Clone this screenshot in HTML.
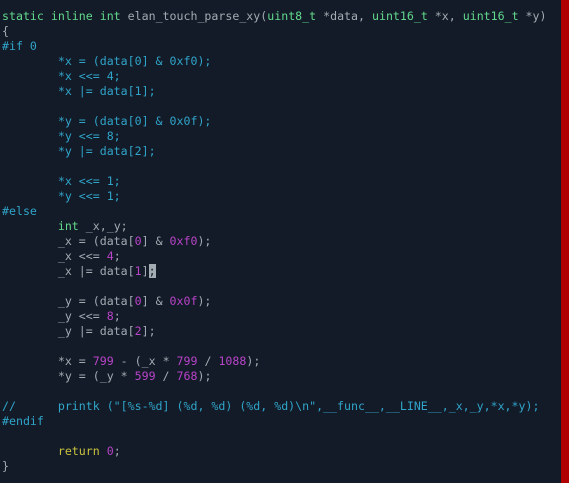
<!DOCTYPE html>
<html><head><meta charset="utf-8"><style>
html,body{margin:0;padding:0;}
body{width:569px;height:483px;background:#131a28;overflow:hidden;position:relative;}
pre{margin:0;position:absolute;left:2px;top:9px;font-family:"DejaVu Sans Mono","Liberation Mono",monospace;font-size:11.6px;line-height:15px;color:#a3abb3;}
.c{color:#30a5c9}.g{color:#62d98c}.m{color:#b844c8}.y{color:#c9c43c}
.cur{background:#a3abb3;color:#131a28}
.bar{position:absolute;left:561px;top:0;width:8px;height:483px;background:#b00000;}
</style></head><body>
<pre><span class="g">static inline int</span> elan_touch_parse_xy(<span class="g">uint8_t</span> *data, <span class="g">uint16_t</span> *x, <span class="g">uint16_t</span> *y)
{
<span class="c">#if 0
        *x = (data[0] &amp; 0xf0);
        *x &lt;&lt;= 4;
        *x |= data[1];

        *y = (data[0] &amp; 0x0f);
        *y &lt;&lt;= 8;
        *y |= data[2];

        *x &lt;&lt;= 1;
        *y &lt;&lt;= 1;
#else</span>
        <span class="g">int</span> _x,_y;
        _x = (data[<span class="m">0</span>] &amp; <span class="m">0xf0</span>);
        _x &lt;&lt;= <span class="m">4</span>;
        _x |= data[<span class="m">1</span>]<span class="cur">;</span>

        _y = (data[<span class="m">0</span>] &amp; <span class="m">0x0f</span>);
        _y &lt;&lt;= <span class="m">8</span>;
        _y |= data[<span class="m">2</span>];

        *x = <span class="m">799</span> - (_x * <span class="m">799</span> / <span class="m">1088</span>);
        *y = (_y * <span class="m">599</span> / <span class="m">768</span>);

<span class="c">//      printk ("[%s-%d] (%d, %d) (%d, %d)\n",__func__,__LINE__,_x,_y,*x,*y);
#endif</span>

        <span class="y">return</span> <span class="m">0</span>;
}</pre>
<div class="bar"></div>
</body></html>
